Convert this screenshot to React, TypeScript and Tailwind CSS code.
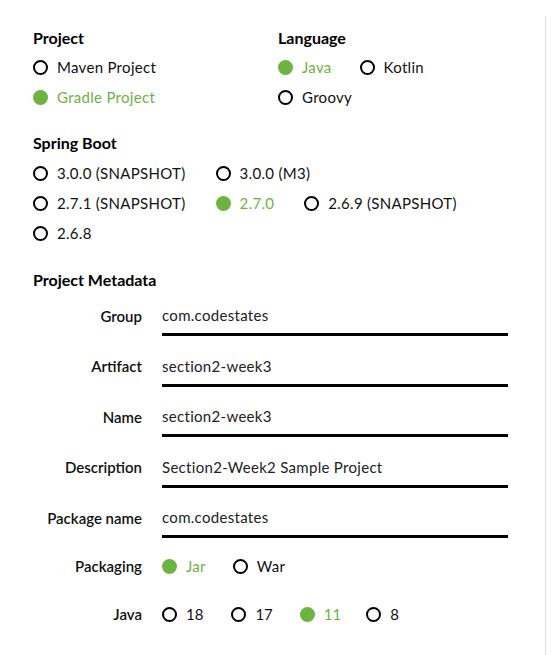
import React from "react";

type RadioProps = { label: string; checked?: boolean; gap?: string };

function Radio({ label, checked, gap = "mr-[30px]" }: RadioProps) {
  return (
    <div className={`flex h-[30px] items-center ${gap}`}>
      {checked ? (
        <span className="w-[15px] h-[15px] rounded-full bg-[#6db33f]" />
      ) : (
        <span className="w-[15px] h-[15px] rounded-full border-2 border-black" />
      )}
      <span className={checked ? "ml-[9px] text-[#6db33f]" : "ml-[9px] text-[#111]"}>{label}</span>
    </div>
  );
}

function Heading({ children }: { children: React.ReactNode }) {
  return <div className="h-6 leading-6 text-[16px] font-bold text-black tracking-normal">{children}</div>;
}

function Field({ label, value }: { label: string; value: string }) {
  return (
    <div className="flex mb-[13.5px]">
      <div className="w-[109px] h-[34px] flex items-center justify-end font-semibold text-[#111] tracking-normal">
        {label}
      </div>
      <div className="ml-5 w-[346px] h-[37px] border-b-[3px] border-black flex items-start pt-[5px] text-[#222]">
        {value}
      </div>
    </div>
  );
}

export default function App() {
  return (
    <div
      className="relative w-[551px] h-[655px] bg-white overflow-hidden text-[15px] tracking-[0.3px]"
      style={{ fontFamily: "Lato, 'Open Sans', sans-serif" }}
    >
      <div className="absolute left-[545px] top-[16px] bottom-0 w-px bg-[#dde4e4]" />
      <div className="pl-[33px] pt-[26px]">
        <div className="flex">
          <div className="w-[245px]">
            <Heading>Project</Heading>
            <div className="mt-[2px]">
              <Radio label="Maven Project" />
              <Radio label="Gradle Project" checked />
            </div>
          </div>
          <div>
            <Heading>Language</Heading>
            <div className="mt-[2px] flex flex-wrap w-[200px]">
              <Radio label="Java" checked gap="mr-[28px]" />
              <Radio label="Kotlin" />
              <Radio label="Groovy" />
            </div>
          </div>
        </div>

        <div className="mt-[19px]">
          <Heading>Spring Boot</Heading>
          <div className="mt-[3px] flex flex-wrap w-[470px]">
            <Radio label="3.0.0 (SNAPSHOT)" />
            <Radio label="3.0.0 (M3)" />
            <div className="w-full" />
            <Radio label="2.7.1 (SNAPSHOT)" />
            <Radio label="2.7.0" checked />
            <Radio label="2.6.9 (SNAPSHOT)" />
            <Radio label="2.6.8" />
          </div>
        </div>

        <div className="mt-5">
          <Heading>Project Metadata</Heading>
          <div className="mt-[7px]">
            <Field label="Group" value="com.codestates" />
            <Field label="Artifact" value="section2-week3" />
            <Field label="Name" value="section2-week3" />
            <Field label="Description" value="Section2-Week2 Sample Project" />
            <Field label="Package name" value="com.codestates" />
          </div>
          <div className="flex mt-[9px]">
            <div className="w-[109px] h-[30px] flex items-center justify-end font-semibold text-[#111] tracking-normal">
              Packaging
            </div>
            <div className="ml-5 flex">
              <Radio label="Jar" checked gap="mr-[27px]" />
              <Radio label="War" />
            </div>
          </div>
          <div className="flex mt-[18px]">
            <div className="w-[109px] h-[30px] flex items-center justify-end font-semibold text-[#111] tracking-normal">
              Java
            </div>
            <div className="ml-5 flex tracking-normal">
              <Radio label="18" gap="mr-[28px]" />
              <Radio label="17" gap="mr-[27px]" />
              <Radio label="11" checked gap="mr-[25px]" />
              <Radio label="8" />
            </div>
          </div>
        </div>
      </div>
    </div>
  );
}
